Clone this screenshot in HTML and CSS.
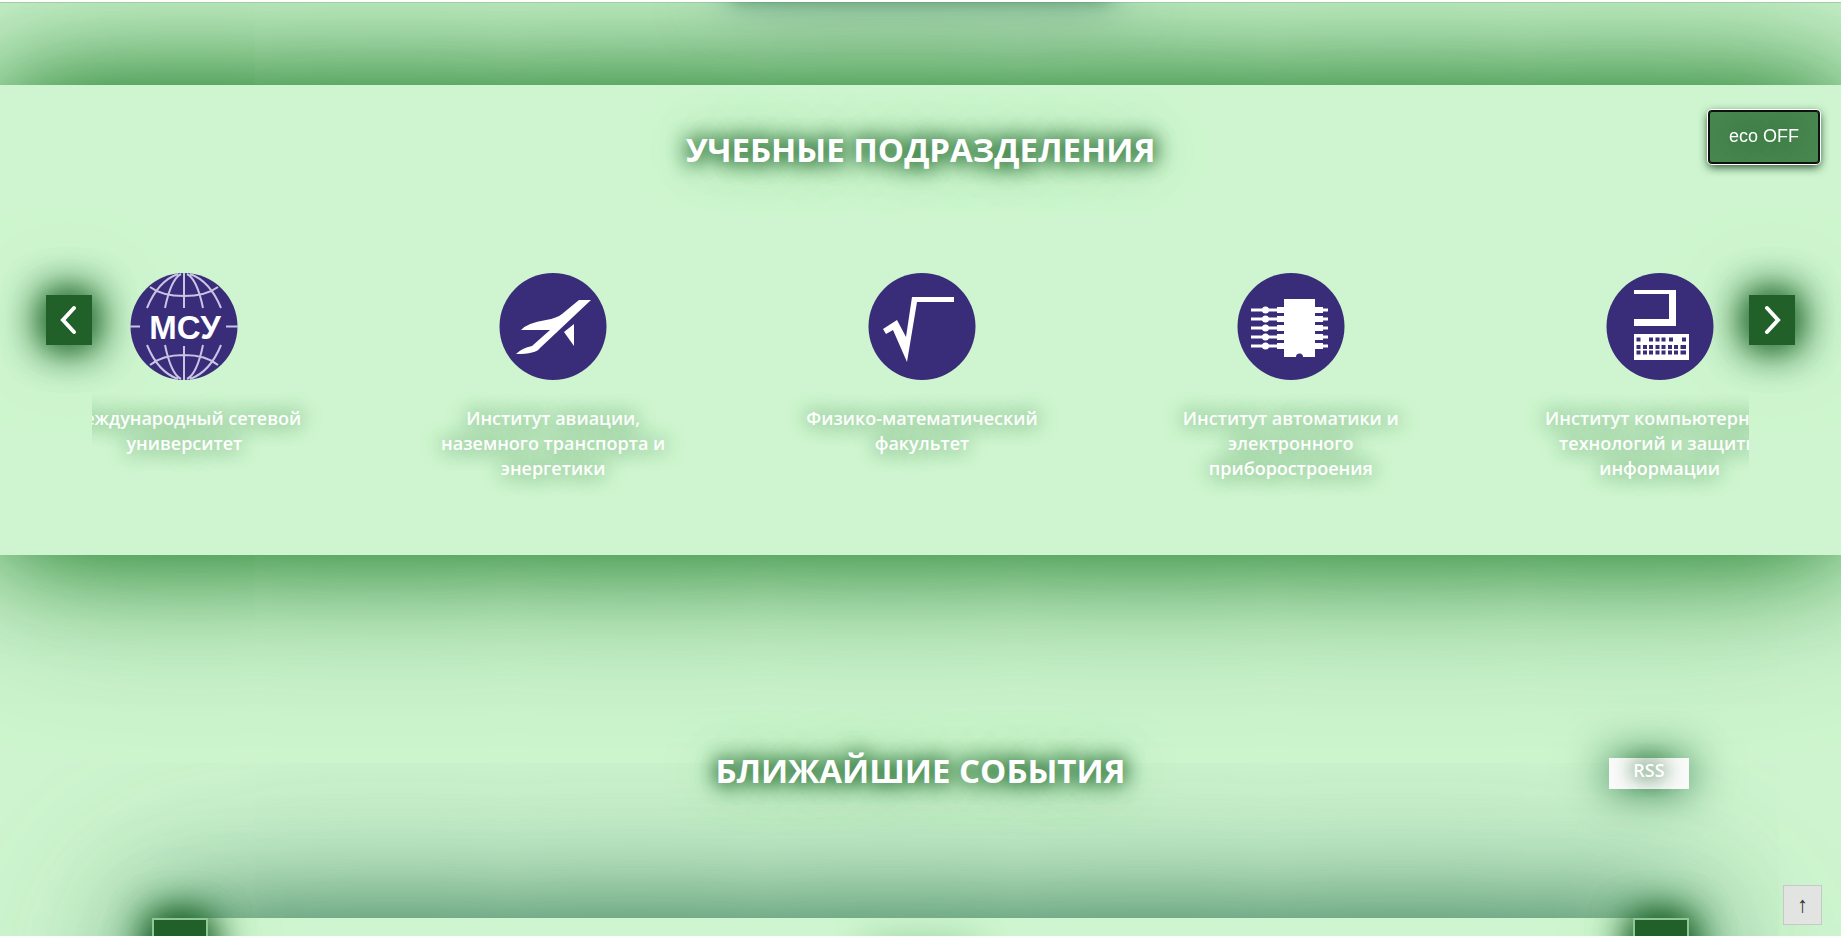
FILE: index.html
```html
<!DOCTYPE html>
<html lang="ru">
<head>
<meta charset="utf-8">
<meta name="viewport" content="width=device-width, initial-scale=1">
<title>Учебные подразделения</title>
<link rel="stylesheet" href="styles.css">
</head>
<body>
<header class="topbar"><div class="topbar-glow"></div></header>
<button class="eco" type="button">eco OFF</button>
<main>
<section class="units">
  <h2 class="title">Учебные подразделения</h2>
  <div class="slider">
    <button class="arrow" type="button" aria-label="Назад"><svg viewBox="0 0 46 50"><path d="M28 13 17 25 28 37"/></svg></button>
    <div class="viewport">
      <ul class="track">
        <li class="unit"><a href="#">
          <svg class="icon" viewBox="0 0 108 107"><circle class="disc" cx="54" cy="53.500" r="53.500"/>
            <g class="wire"><path d="M54 0V35M54 73V107M0 53.500H10M96 53.500H108M17 35Q28 8 48 1M35 35Q41 6 51 1M91 35Q80 8 60 1M73 35Q67 6 57 1M17 72Q28 99 48 106M35 72Q41 101 51 106M91 72Q80 99 60 106M73 72Q67 101 57 106M20 14Q32 23 54 23T88 14M20 92Q32 82 54 82T88 92"/></g>
            <text class="msu" x="55" y="66" text-anchor="middle">МСУ</text></svg>
          <span>Международный сетевой университет</span></a></li>
        <li class="unit"><a href="#">
          <svg class="icon" viewBox="0 0 108 107"><circle class="disc" cx="54" cy="53.500" r="53.500"/>
            <path class="mark" d="M92 27 57 60 41 75Q37 81 17 81Q23 75 33 73L51 57H22Q28 50 47 47Q58 45 63 41L80 27ZM75 51V73L65 59Z"/></svg>
          <span>Институт авиации, наземного транспорта и энергетики</span></a></li>
        <li class="unit"><a href="#">
          <svg class="icon" viewBox="0 0 108 107"><circle class="disc" cx="54" cy="53.500" r="53.500"/>
            <path class="mark" d="M15 56 29 47 38 64 44 24H86V29H49L39 89 25 57 18 61Z"/></svg>
          <span>Физико-математический факультет</span></a></li>
        <li class="unit"><a href="#">
          <svg class="icon" viewBox="0 0 108 107"><circle class="disc" cx="54" cy="53.500" r="53.500"/>
            <path class="mark" d="M47 26H78V84H66A3.500 3.500 0 0 0 59 84H47Z"/>
            <path class="pins" d="M14 37H91M14 46H91M14 55H91M14 64H91M14 73H91"/>
            <path class="legs" d="M40 37H86M40 46H86M40 55H86M40 64H86M40 73H86"/>
            <g class="mark"><circle cx="28.500" cy="37" r="3.500"/><circle cx="28.500" cy="46" r="3.500"/><circle cx="28.500" cy="55" r="3.500"/><circle cx="28.500" cy="64" r="3.500"/><circle cx="28.500" cy="73" r="3.500"/></g></svg>
          <span>Институт автоматики и электронного приборостроения</span></a></li>
        <li class="unit"><a href="#">
          <svg class="icon" viewBox="0 0 108 107"><circle class="disc" cx="54" cy="53.500" r="53.500"/>
            <path class="mark" d="M28 17H70V53H28V46H63V21H28ZM28 61H83V87H28Z"/>
            <path class="keys" d="M30.500 66.500H34.500M43 66.500H47M49.500 66.500H53.500M55.500 66.500H59.500M63 66.500H67M76 66.500H80M30.500 74H34.500M37 74H41M43 74H47M49.500 74H53.500M55.500 74H59.500M62 74H66M68 74H72M74.500 74H80M30.500 79.500H34.500M37 79.500H41M43 79.500H47M49.500 79.500H53.500M55.500 79.500H59.500M62 79.500H66M68 79.500H72M74.500 79.500H80"/></svg>
          <span>Институт компьютерных технологий и защиты информации</span></a></li>
      </ul>
    </div>
    <button class="arrow" type="button" aria-label="Вперёд"><svg viewBox="0 0 46 50"><path d="M18 13 29 25 18 37"/></svg></button>
  </div>
</section>
<section class="events">
  <div class="events-head">
    <h2 class="title">Ближайшие события</h2>
    <a class="rss" href="#">RSS</a>
  </div>
  <div class="calendar">
    <button class="month-nav" type="button" aria-label="Предыдущий месяц"></button>
    <div class="month-glow"></div>
    <button class="month-nav" type="button" aria-label="Следующий месяц"></button>
  </div>
</section>
</main>
<button class="to-top" type="button" aria-label="Наверх">↑</button>
</body>
</html>
```
FILE: styles.css
```css
* { box-sizing: border-box; }
body {
  margin: 0;
  height: 100vh;
  overflow: hidden;
  background: #cef5cf;
  color: #fff;
  font-family: "Open Sans", sans-serif;
}
button { font: inherit; padding: 0; }
.topbar {
  position: relative;
  z-index: 2;
  height: 3px;
  background: #fff;
  border-bottom: 1px solid #9fcfa3;
}
.topbar-glow {
  position: absolute;
  inset: 2px 0 auto;
  height: 60px;
  overflow: hidden;
}
.topbar-glow::before {
  content: "";
  position: absolute;
  left: 50%;
  bottom: 100%;
  width: 380px;
  height: 60px;
  transform: translateX(-50%);
  box-shadow: 0 0 20px rgba(60, 130, 90, .7), 0 0 70px rgba(70, 120, 110, .5);
}
.units {
  margin-top: 82px;
  padding: 41px 46px 0;
  height: 470px;
  background: #cef5cf;
  box-shadow: 0 0 100px rgba(14, 114, 26, .95), 0 0 200px rgba(50, 140, 60, .55);
}
.title {
  margin: 0;
  font-size: 33px;
  line-height: 48px;
  font-weight: 700;
  text-align: center;
  text-transform: uppercase;
  text-shadow: 0 0 20px #1d662a, 0 0 20px #1d662a, 0 0 50px #6fb57b;
}
.slider {
  display: flex;
  margin-top: 99px;
}
.arrow {
  flex: none;
  width: 46px;
  height: 50px;
  margin-top: 22px;
  border: 0;
  background: #22602a;
  box-shadow: 0 0 40px #0c561a, 0 0 40px #0c561a, 0 0 90px #a5d9aa;
}
.arrow svg {
  display: block;
  width: 46px;
  height: 50px;
  fill: none;
  stroke: #fff;
  stroke-width: 4;
  stroke-linecap: round;
}
.viewport {
  position: relative;
  flex: 1;
  min-width: 0;
  overflow: hidden;
}
.track {
  display: grid;
  grid-template-columns: repeat(5, 1fr);
  margin: 0 -95px 0 -92px;
  padding: 0 0 50px;
  list-style: none;
}
.unit a {
  display: flex;
  flex-direction: column;
  align-items: center;
  gap: 26px;
  color: #fff;
  text-decoration: none;
}
.unit span {
  width: 240px;
  font-size: 18px;
  line-height: 25px;
  font-weight: 600;
  text-align: center;
  text-shadow: 0 0 20px #2f7a3b;
}
.icon { width: 108px; height: 107px; }
.disc { fill: #392d7a; }
.mark { fill: #fff; }
.wire { fill: none; stroke: #c9c4e6; stroke-width: 2; }
.msu { fill: #fff; font: 700 33px "Liberation Sans", sans-serif; }
.pins { fill: none; stroke: #fff; stroke-width: 3; }
.legs { fill: none; stroke: #fff; stroke-width: 6; }
.keys { fill: none; stroke: #392d7a; stroke-width: 4; }
.events {
  width: calc(100% - 304px);
  margin: 0 auto;
  padding-top: 192px;
}
.events-head {
  position: relative;
  z-index: 1;
  display: grid;
  grid-template-columns: 80px 1fr 80px;
  align-items: center;
}
.events-head .title { grid-column: 2; }
.rss {
  height: 31px;
  margin-top: 4px;
  background: #fafafa;
  color: #fff;
  font-size: 18px;
  line-height: 25px;
  font-weight: 600;
  text-align: center;
  text-decoration: none;
  text-shadow: 0 0 20px #1d662a, 0 0 20px #1d662a;
  box-shadow: 0 0 40px #2f7d4a, 0 0 60px #a4cfad;
}
.calendar {
  display: flex;
  justify-content: space-between;
  height: 200px;
  margin-top: 123px;
  background: #cef5cf;
  box-shadow: 0 0 100px rgba(20, 95, 60, .75), 0 0 200px rgba(50, 120, 90, .5);
}
.month-nav {
  width: 56px;
  height: 56px;
  background: #22602a;
  border: 2px solid #8fc796;
  box-shadow: 0 0 40px #0c561a, 0 0 40px #0c561a, 0 0 90px #a5d9aa;
}
.month-glow {
  width: 110px;
  height: 30px;
  margin-top: 28px;
  box-shadow: 0 0 40px #7fbd89;
}
.eco {
  position: fixed;
  z-index: 5;
  top: 111px;
  right: 22px;
  width: 110px;
  height: 52px;
  padding-bottom: 2px;
  border: 0;
  border-radius: 3px;
  background: #48864f;
  color: #fff;
  font-family: "Liberation Sans", sans-serif;
  font-size: 18px;
  text-shadow: 0 0 20px #1d662a;
  box-shadow: inset 0 0 0 1px #101010, 0 0 0 1px #101010, 0 0 0 2px #fff, 0 3px 10px 1px #1d4a25;
}
.to-top {
  position: fixed;
  z-index: 5;
  right: 19px;
  bottom: 11px;
  width: 39px;
  height: 40px;
  border: 1px solid #c8c8c8;
  background: #e2e4e2;
  color: #333;
  font-family: "Liberation Sans", sans-serif;
  font-size: 22px;
}
```
